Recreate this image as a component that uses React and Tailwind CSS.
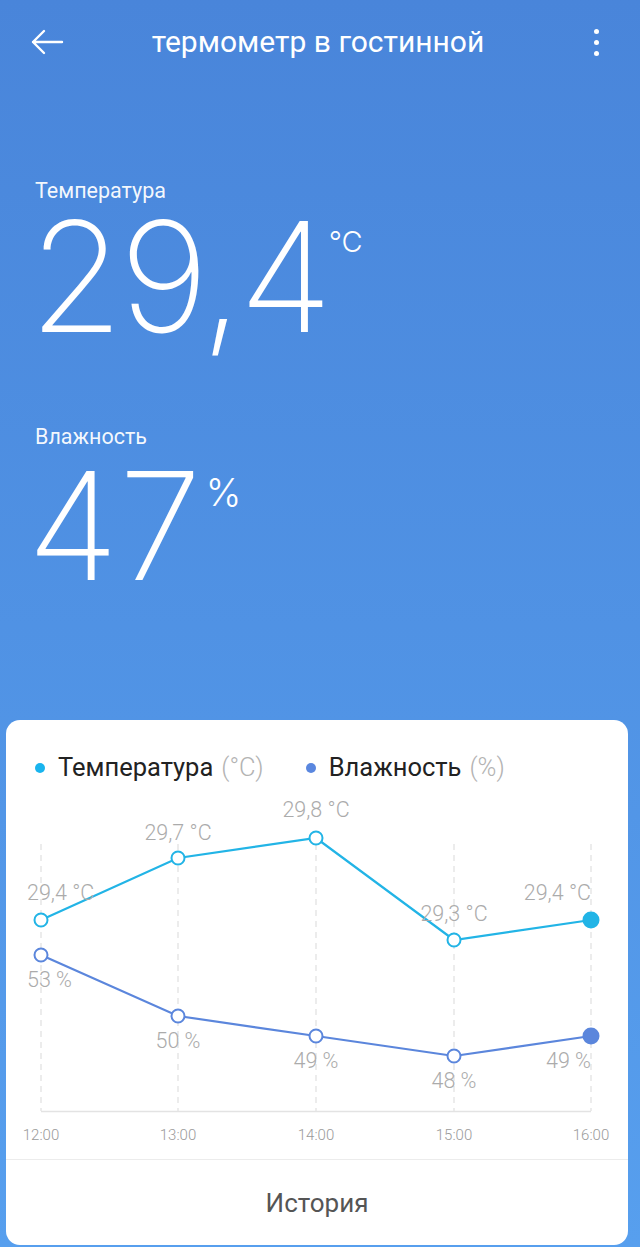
import React from 'react';

const OY = 8;
const xs = [35, 172, 310, 448, 585];
const temp = [
  { y: 120, label: '29,4 °C', lx: 21, ly: 99, anchor: 'start' },
  { y: 58, label: '29,7 °C', lx: 172, ly: 39, anchor: 'middle' },
  { y: 38, label: '29,8 °C', lx: 310, ly: 16, anchor: 'middle' },
  { y: 140, label: '29,3 °C', lx: 448, ly: 120, anchor: 'middle' },
  { y: 120, label: '29,4 °C', lx: 585, ly: 99, anchor: 'end' },
];
const hum = [
  { y: 155, label: '53 %', lx: 21, ly: 186, anchor: 'start' },
  { y: 216, label: '50 %', lx: 172, ly: 247, anchor: 'middle' },
  { y: 236, label: '49 %', lx: 310, ly: 267, anchor: 'middle' },
  { y: 256, label: '48 %', lx: 448, ly: 287, anchor: 'middle' },
  { y: 236, label: '49 %', lx: 585, ly: 267, anchor: 'end' },
];
const times = ['12:00', '13:00', '14:00', '15:00', '16:00'];

const TEMP = '#22b4e6';
const HUM = '#5b86dc';

function Series({ data, color }) {
  const pts = data.map((d, i) => `${xs[i]},${d.y + OY}`).join(' ');
  return (
    <g>
      <polyline points={pts} fill="none" stroke={color} strokeWidth="2.2" />
      {data.map((d, i) => (
        <circle
          key={i}
          cx={xs[i]}
          cy={d.y + OY}
          r={i === data.length - 1 ? 7.5 : 6.5}
          fill={i === data.length - 1 ? color : '#fff'}
          stroke={color}
          strokeWidth="2"
        />
      ))}
    </g>
  );
}

function Labels({ data }) {
  return data.map((d, i) => (
    <text
      key={i}
      x={d.lx}
      y={d.ly + OY + 1}
      textAnchor={d.anchor}
      fontSize="21.5"
      fontWeight="300"
      fill="#ababab"
      style={{ fontFamily: 'Roboto, "Liberation Sans", sans-serif' }}
    >
      {d.label}
    </text>
  ));
}

function Chart() {
  return (
    <svg width="622" height="367" viewBox="0 0 622 367" className="block">
      {xs.map((x) => (
        <line key={x} x1={x} y1={44 + OY} x2={x} y2={311 + OY} stroke="#d9d9d9" strokeWidth="1" strokeDasharray="6 5" />
      ))}
      <line x1="35" y1={311.5 + OY} x2="585" y2={311.5 + OY} stroke="#e3e3e3" strokeWidth="1.5" />
      <Series data={temp} color={TEMP} />
      <Series data={hum} color={HUM} />
      <Labels data={temp} />
      <Labels data={hum} />
      {times.map((t, i) => (
        <text
          key={t}
          x={xs[i]}
          y={340 + OY}
          textAnchor="middle"
          fontSize="15"
          fontWeight="300"
          fill="#9a9a9a"
          style={{ fontFamily: 'Roboto, "Liberation Sans", sans-serif' }}
        >
          {t}
        </text>
      ))}
    </svg>
  );
}

export default function App() {
  return (
    <div className="h-[1247px] w-[640px] overflow-hidden flex flex-col bg-gradient-to-b from-[#4985da] to-[#579fee] font-['Roboto','Liberation_Sans',sans-serif] text-white">
      {/* Header */}
      <div className="h-[84px] grid grid-cols-[80px_1fr_80px] items-center">
        <div className="pl-[30px]">
          <svg width="34" height="26" viewBox="0 0 34 26" fill="none" stroke="white" strokeWidth="2.4" strokeLinecap="round" strokeLinejoin="round">
            <path d="M32 13H3M14 2L3 13l11 11" />
          </svg>
        </div>
        <span className="text-[30px] leading-none text-center pr-[4px]">термометр в гостинной</span>
        <div className="flex justify-end pr-[41px]">
          <div className="flex flex-col gap-[6px]">
            <span className="w-[5px] h-[5px] rounded-full bg-white" />
            <span className="w-[5px] h-[5px] rounded-full bg-white" />
            <span className="w-[5px] h-[5px] rounded-full bg-white" />
          </div>
        </div>
      </div>

      {/* Readings */}
      <div className="pl-[35px] pt-[95px]">
        <div className="text-[21.5px] leading-[24px] text-white/95">Температура</div>
        <div className="flex items-start font-['Inter',sans-serif] font-extralight mt-[14px] -ml-[6px]">
          <span className="text-[153px] leading-[120px] tracking-[-4px]">29,4</span>
          <span className="text-[29px] leading-none mt-[10px] font-light">°C</span>
        </div>

        <div className="text-[21.5px] leading-[24px] text-white/95 mt-[88px]">Влажность</div>
        <div className="flex items-start font-['Inter',sans-serif] font-extralight mt-[17px] -ml-[8px]">
          <span className="text-[150px] leading-[120px]">47</span>
          <span className="text-[38px] leading-none mt-[7px] ml-[4px] font-light">%</span>
        </div>
      </div>

      <div className="flex-1" />

      {/* Chart card */}
      <div className="ml-[6px] w-[622px] h-[525px] mb-[2px] bg-white rounded-[14px] flex flex-col">
        <div className="h-[72px] flex items-center pl-[29px] pt-[24px] text-[25.5px] leading-none">
          <span className="w-[10px] h-[10px] rounded-full bg-[#19b4ee] mr-[13px]" />
          <span className="text-[#222]">Температура</span>
          <span className="text-[#b3b3b3] font-light ml-[8px]">(°C)</span>
          <span className="w-[10px] h-[10px] rounded-full bg-[#5a87df] ml-[42px] mr-[13px]" />
          <span className="text-[#222]">Влажность</span>
          <span className="text-[#b3b3b3] font-light ml-[8px]">(%)</span>
        </div>
        <Chart />
        <div className="flex-1 border-t border-[#ececec] flex items-center justify-center">
          <span className="text-[26px] text-[#555] pt-[2px]">История</span>
        </div>
      </div>
    </div>
  );
}
